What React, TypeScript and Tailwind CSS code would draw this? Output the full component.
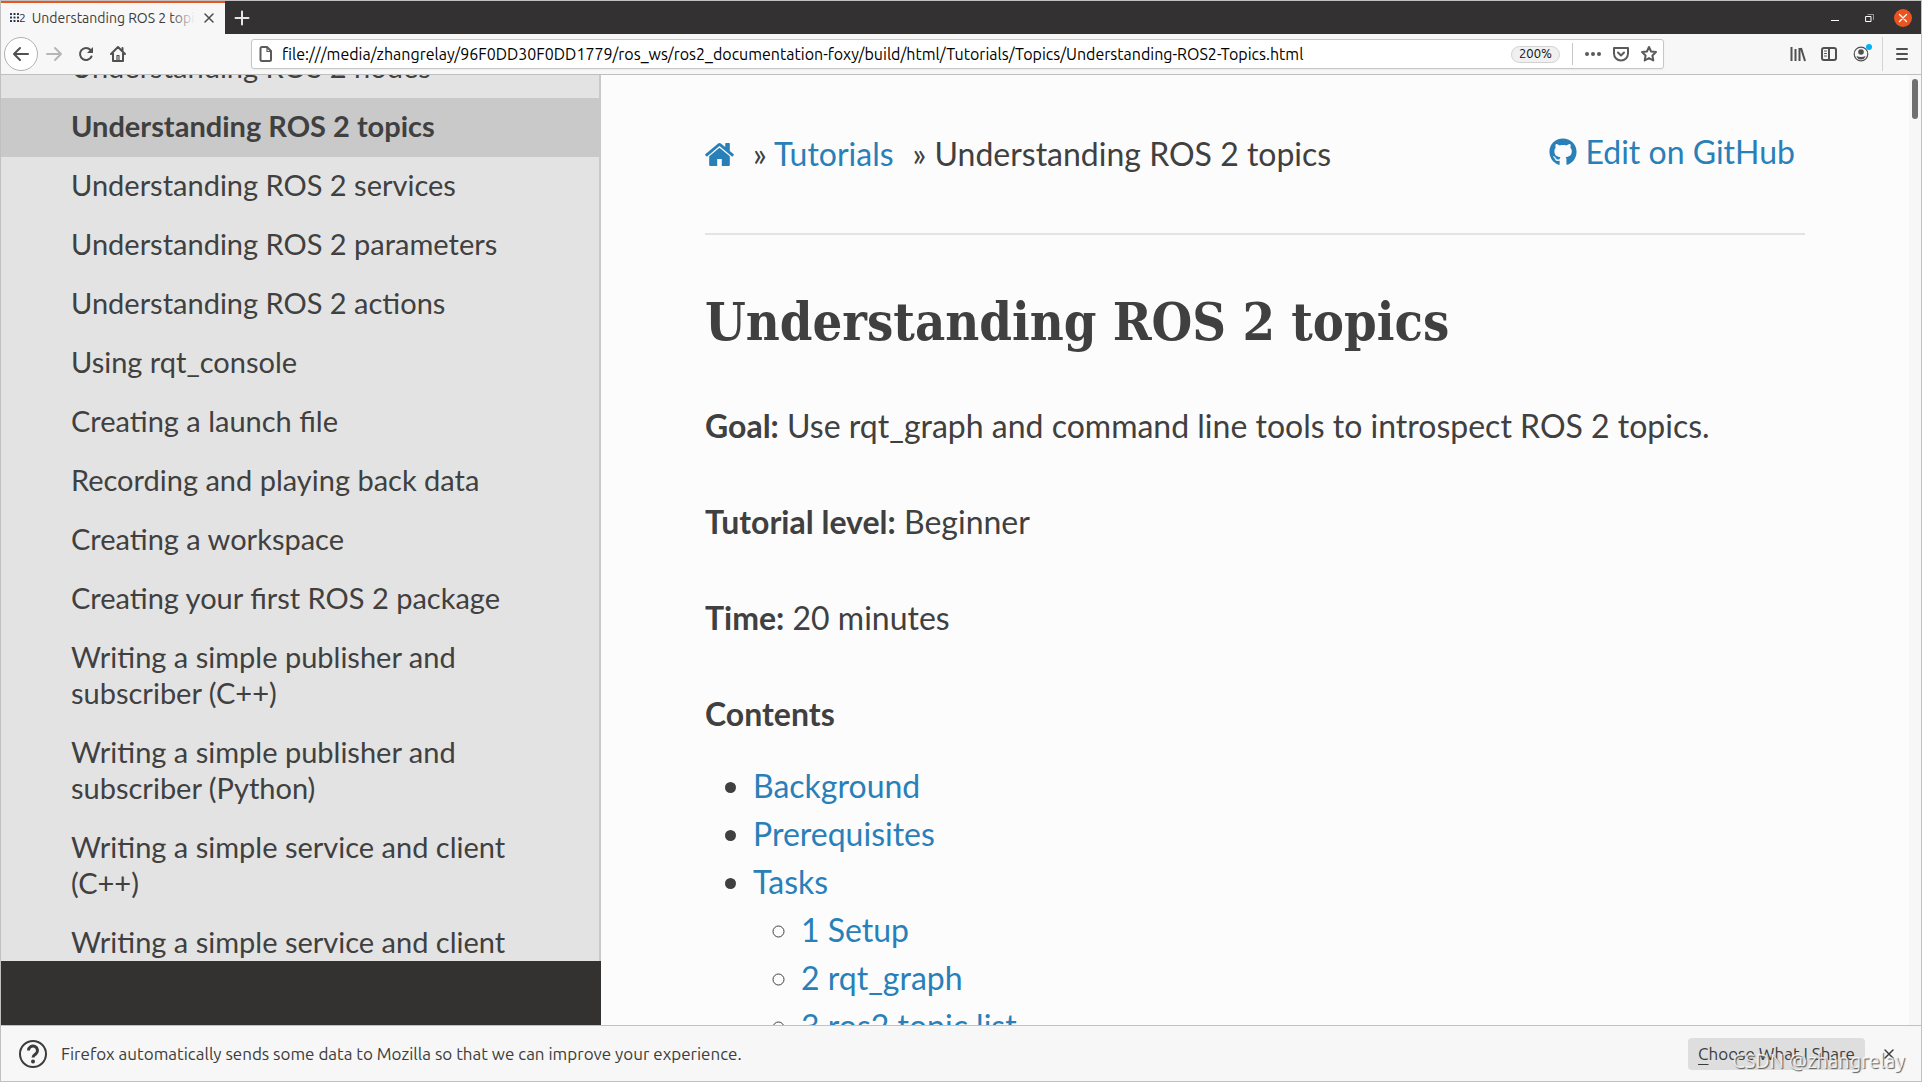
import React from "react";
import { FaGithub } from "react-icons/fa";

const menuItems = [
  "Understanding ROS 2 nodes",
  "Understanding ROS 2 topics",
  "Understanding ROS 2 services",
  "Understanding ROS 2 parameters",
  "Understanding ROS 2 actions",
  "Using rqt_console",
  "Creating a launch file",
  "Recording and playing back data",
  "Creating a workspace",
  "Creating your first ROS 2 package",
  "Writing a simple publisher and subscriber (C++)",
  "Writing a simple publisher and subscriber (Python)",
  "Writing a simple service and client (C++)",
  "Writing a simple service and client (Python)",
];

const tasks = ["1 Setup", "2 rqt_graph", "3 ros2 topic list"];

const summary = [
  { label: "Goal:", text: "Use rqt_graph and command line tools to introspect ROS 2 topics." },
  { label: "Tutorial level:", text: "Beginner" },
  { label: "Time:", text: "20 minutes" },
];

interface IconButtonProps {
  label: string;
  className?: string;
  children: React.ReactNode;
}

const IconButton = ({ label, className = "", children }: IconButtonProps) => (
  <button type="button" aria-label={label} className={`flex items-center justify-center ${className}`}>
    <svg
      viewBox="0 0 16 16"
      className="h-4 w-4 overflow-visible"
      fill="none"
      stroke="currentColor"
      strokeWidth="2"
      strokeLinecap="round"
      strokeLinejoin="round"
    >
      {children}
    </svg>
  </button>
);

const Favicon = () => (
  <span className="flex shrink-0 items-center text-[#22314e]">
    <svg viewBox="0 0 9 9" className="h-[9px] w-[9px]" fill="currentColor">
      {[0, 3.5, 7].map((y) =>
        [0, 3.5, 7].map((x) => <rect key={`${x}-${y}`} x={x} y={y} width="2" height="2" rx="0.5" />)
      )}
    </svg>
    <span className="text-xs">2</span>
  </span>
);

const TabBar = () => (
  <div className="flex h-[33px] shrink-0 items-stretch bg-[#333132]">
    <div className="flex w-56 shrink-0 items-center gap-1.5 border-t-2 border-[#e95420] bg-[#f7f7f7] pr-2 pb-0.5 pl-[9px]">
      <Favicon />
      <div className="relative flex-1 overflow-hidden whitespace-nowrap text-sm text-[#3c3c3c]">
        Understanding ROS 2 topics
        <span className="absolute inset-y-0 right-0 w-6 bg-gradient-to-r from-transparent to-[#f7f7f7]" />
      </div>
      <IconButton label="Close tab" className="text-[#4a4a4a]">
        <path d="M4 4l8 8M12 4l-8 8" strokeWidth="1.5" />
      </IconButton>
    </div>
    <IconButton label="New tab" className="w-[34px] text-[#e6e6e6]">
      <path d="M8 1.5v13M1.5 8h13" />
    </IconButton>
    <div className="ml-auto flex items-center gap-4 pr-[9px] text-white">
      <IconButton label="Minimize" className="w-[18px]">
        <path d="M4 10.5h8" strokeWidth="1" strokeLinecap="butt" />
      </IconButton>
      <IconButton label="Restore" className="w-[18px]">
        <path d="M5 6.5h5v5h-5z" strokeWidth="1" strokeLinejoin="miter" />
        <path d="M7 4.5h5.5v5" strokeWidth="1" strokeOpacity="0.5" />
      </IconButton>
      <IconButton label="Close window" className="h-[18px] w-[18px] rounded-full bg-[#e95420]">
        <path d="M4.500 4.500l7 7M11.500 4.500l-7 7" strokeWidth="1.3" />
      </IconButton>
    </div>
  </div>
);

const AddressBar = () => (
  <div className="flex h-[30px] min-w-0 flex-1 items-center rounded-[3px] border border-[#c6c6c6] bg-white px-1.5 text-[#5a5a5a] shadow-xs">
    <IconButton label="Page info" className="w-4">
      <path d="M4 1h5l4 4v8.500a1.500 1.500 0 0 1-1.500 1.500h-7.500a1.500 1.500 0 0 1-1.500-1.500v-11A1.500 1.500 0 0 1 4 1z" />
      <path d="M9 1.500v4h4" strokeWidth="1.2" />
    </IconButton>
    <input
      type="text"
      aria-label="Address"
      className="ml-2 min-w-0 flex-1 bg-transparent text-base text-black outline-none"
      defaultValue="file:///media/zhangrelay/96F0DD30F0DD1779/ros_ws/ros2_documentation-foxy/build/html/Tutorials/Topics/Understanding-ROS2-Topics.html"
    />
    <button
      type="button"
      className="flex h-[17px] w-[49px] items-center justify-center rounded-full border border-[#d2d2d2] bg-[#f0f0f0] text-[13px] text-[#0c0c0d]"
    >
      200%
    </button>
    <span className="ml-3 h-[22px] w-px bg-[#c6c6c6]" />
    <div className="ml-3 flex gap-3">
      <IconButton label="Page actions">
        <path d="M2 8h.01M8 8h.01M14 8h.01" strokeWidth="4" />
      </IconButton>
      <IconButton label="Save to Pocket">
        <path d="M1 2h14v5.500a7 7 0 0 1-14 0z" />
        <path d="M5 6.500l3 3 3-3" />
      </IconButton>
      <IconButton label="Bookmark this page">
        <path d="M8 1l2.100 4.500 4.900.6-3.600 3.400.9 5L8 12.100l-4.300 2.400.9-5L1 6.100l4.900-.6z" />
      </IconButton>
    </div>
  </div>
);

const Toolbar = () => (
  <div className="flex h-[41px] shrink-0 items-center border-b border-[#bfbfbf] bg-[#f7f7f7] pl-[3px] text-[#505050]">
    <IconButton label="Back" className="h-[34px] w-[34px] rounded-full border border-[#b1b1b1] bg-white">
      <path d="M1 8h14M7 2L1 8l6 6" />
    </IconButton>
    <div className="ml-2 flex gap-4">
      <IconButton label="Forward" className="text-[#b6b6b6]">
        <path d="M1 8h14M9 2l6 6-6 6" />
      </IconButton>
      <IconButton label="Reload">
        <path d="M13.500 10.500A6 6 0 1 1 12.500 4" />
        <path d="M15 1v6H9z" fill="currentColor" stroke="none" />
      </IconButton>
      <IconButton label="Home">
        <path d="M1 8l7-7 7 7M3 7v8h10V7M12.500 2v3" />
        <path d="M7 9.500h2V15H7z" strokeWidth="1.2" />
      </IconButton>
    </div>
    <div className="mr-[126px] ml-[125px] flex min-w-0 flex-1">
      <AddressBar />
    </div>
    <div className="flex items-center gap-4">
      <IconButton label="Library">
        <path d="M1.500 1v14M5.500 3v12M9.500 2v13M11 2l4 13" strokeLinecap="butt" />
      </IconButton>
      <IconButton label="Sidebars">
        <rect x="0" y="2" width="14" height="12" rx="2" />
        <path d="M7 2v12" />
        <path d="M2.500 5h2M2.500 7.500h2M2.500 10h2" strokeWidth="1" />
      </IconButton>
      <IconButton label="Account">
        <circle cx="7" cy="8" r="6.800" strokeWidth="1.2" />
        <circle cx="7" cy="6" r="2.800" fill="currentColor" stroke="none" />
        <path d="M2.500 10q4.500 2 9 0-1 3.500-4.500 3.500t-4.500-3.500z" fill="currentColor" stroke="none" />
        <circle cx="15" cy="1" r="3" fill="#00b3f4" stroke="none" />
      </IconButton>
    </div>
    <span className="ml-3 h-[34px] w-px bg-[#d4d4d4]" />
    <IconButton label="Menu" className="w-[38px]">
      <path d="M3 3h10M3 8h10M3 13h10" />
    </IconButton>
  </div>
);

const Sidebar = () => (
  <nav className="flex w-[31.25%] shrink-0 flex-col bg-[#343131]">
    <div className="min-h-0 flex-1 overflow-hidden border-r-2 border-[#c9c9c9] bg-[#e3e3e3]">
      <ul className="-mt-9 text-[29px] leading-9 text-[#404040]">
        {menuItems.map((item) => (
          <li key={item}>
            <a
              href="#"
              className={
                item === "Understanding ROS 2 topics"
                  ? "block bg-[#c9c9c9] pt-2.5 pr-16 pb-[13px] pl-[70px] font-bold"
                  : "block pt-2.5 pr-16 pb-[13px] pl-[70px]"
              }
            >
              {item}
            </a>
          </li>
        ))}
      </ul>
    </div>
    <div className="h-16 shrink-0" />
  </nav>
);

const Article = () => (
  <main className="min-w-0 flex-1 overflow-hidden bg-[#fcfcfc] px-[104px] pt-[55px] text-[32px] leading-[48px] text-[#404040]">
    <div className="flex items-start justify-between border-b-2 border-[#e1e4e5] pb-[55px]">
      <div className="flex items-center">
        <a href="#" aria-label="Home" className="text-[#2980b9]">
          <svg viewBox="26 253 1612 1283" className="h-[23px] w-[29px]" fill="currentColor">
            <path d="M1408 992v480q0 26-19 45t-45 19H960v-384H704v384H320q-26 0-45-19t-19-45V992q0-1 .5-3t.5-3l575-474 575 474q1 2 1 6zm223-69l-62 74q-8 9-21 11h-3q-13 0-21-7L832 424l-692 577q-12 8-24 7-13-2-21-11l-62-74q-8-10-7-23.500t11-21.500l719-599q32-26 76-26t76 26l244 204V288q0-14 9-23t23-9h192q14 0 23 9t9 23v408l219 182q10 8 11 21.500t-7 23.500z" />
          </svg>
        </a>
        <span className="ml-[19px]">
          »{" "}
          <a href="#" className="text-[#2980b9]">
            Tutorials
          </a>
        </span>
        <span className="ml-[19px]">» Understanding ROS 2 topics</span>
      </div>
      <a href="#" className="mr-2.5 flex items-center gap-2 leading-[44px] text-[#2980b9]">
        <FaGithub className="h-7 w-7" />
        Edit on GitHub
      </a>
    </div>
    <h1 className="mt-[51px] mb-11 font-['Roboto_Slab','DejaVu_Serif_Condensed','DejaVu_Serif',serif] text-[52px] leading-[72px] font-bold">
      Understanding ROS 2 topics
    </h1>
    {summary.map((row) => (
      <p key={row.label} className="mb-12">
        <strong>{row.label}</strong> {row.text}
      </p>
    ))}
    <p className="mb-6 font-bold">Contents</p>
    <ul className="list-disc pl-12 marker:text-[#404040]">
      <li>
        <a href="#" className="text-[#2980b9]">Background</a>
      </li>
      <li>
        <a href="#" className="text-[#2980b9]">Prerequisites</a>
      </li>
      <li>
        <a href="#" className="text-[#2980b9]">Tasks</a>
        <ul className="list-[circle] pl-12">
          {tasks.map((task) => (
            <li key={task}>
              <a href="#" className="text-[#2980b9]">{task}</a>
            </li>
          ))}
        </ul>
      </li>
    </ul>
  </main>
);

const Notification = () => (
  <footer className="relative flex h-14 shrink-0 items-center border-t border-[#c2c2c2] bg-[#f7f7f7] pr-6 pl-[18px] text-[17px] text-[#3c3c3c]">
    <svg viewBox="0 0 28 28" className="h-7 w-7" fill="none" stroke="currentColor">
      <circle cx="14" cy="14" r="13" strokeWidth="2" />
      <path d="M9.500 10.500a4.500 4.500 0 1 1 7.500 3.300c-2 1.500-3 2-3 3.700" strokeWidth="3" />
      <circle cx="14" cy="21.500" r="2" fill="currentColor" stroke="none" />
    </svg>
    <p className="ml-3.5">
      Firefox automatically sends some data to Mozilla so that we can improve your experience.
    </p>
    <button type="button" className="ml-auto h-8 w-[177px] rounded-sm bg-[#dedede] whitespace-nowrap">
      <span className="underline underline-offset-4">C</span>hoose What I Share
    </button>
    <IconButton label="Dismiss" className="ml-4">
      <path d="M4 4l8 8M12 4l-8 8" strokeWidth="1.5" />
    </IconButton>
    <span className="pointer-events-none absolute right-4 bottom-1.5 text-xl text-white/80 [text-shadow:1px_1px_1px_#555]">
      CSDN @zhangrelay
    </span>
  </footer>
);

export default function App() {
  return (
    <div className="flex h-screen flex-col overflow-hidden border border-[#c0c0c0] font-['Ubuntu','Noto_Sans',sans-serif]">
      <TabBar />
      <Toolbar />
      <div className="flex min-h-0 flex-1 font-['Lato',sans-serif]">
        <Sidebar />
        <Article />
        <div className="w-3 shrink-0 bg-[#f7f7f7] pt-1 pl-[3px]">
          <div className="h-10 w-1.5 rounded-full bg-[#707070]" />
        </div>
      </div>
      <Notification />
    </div>
  );
}
